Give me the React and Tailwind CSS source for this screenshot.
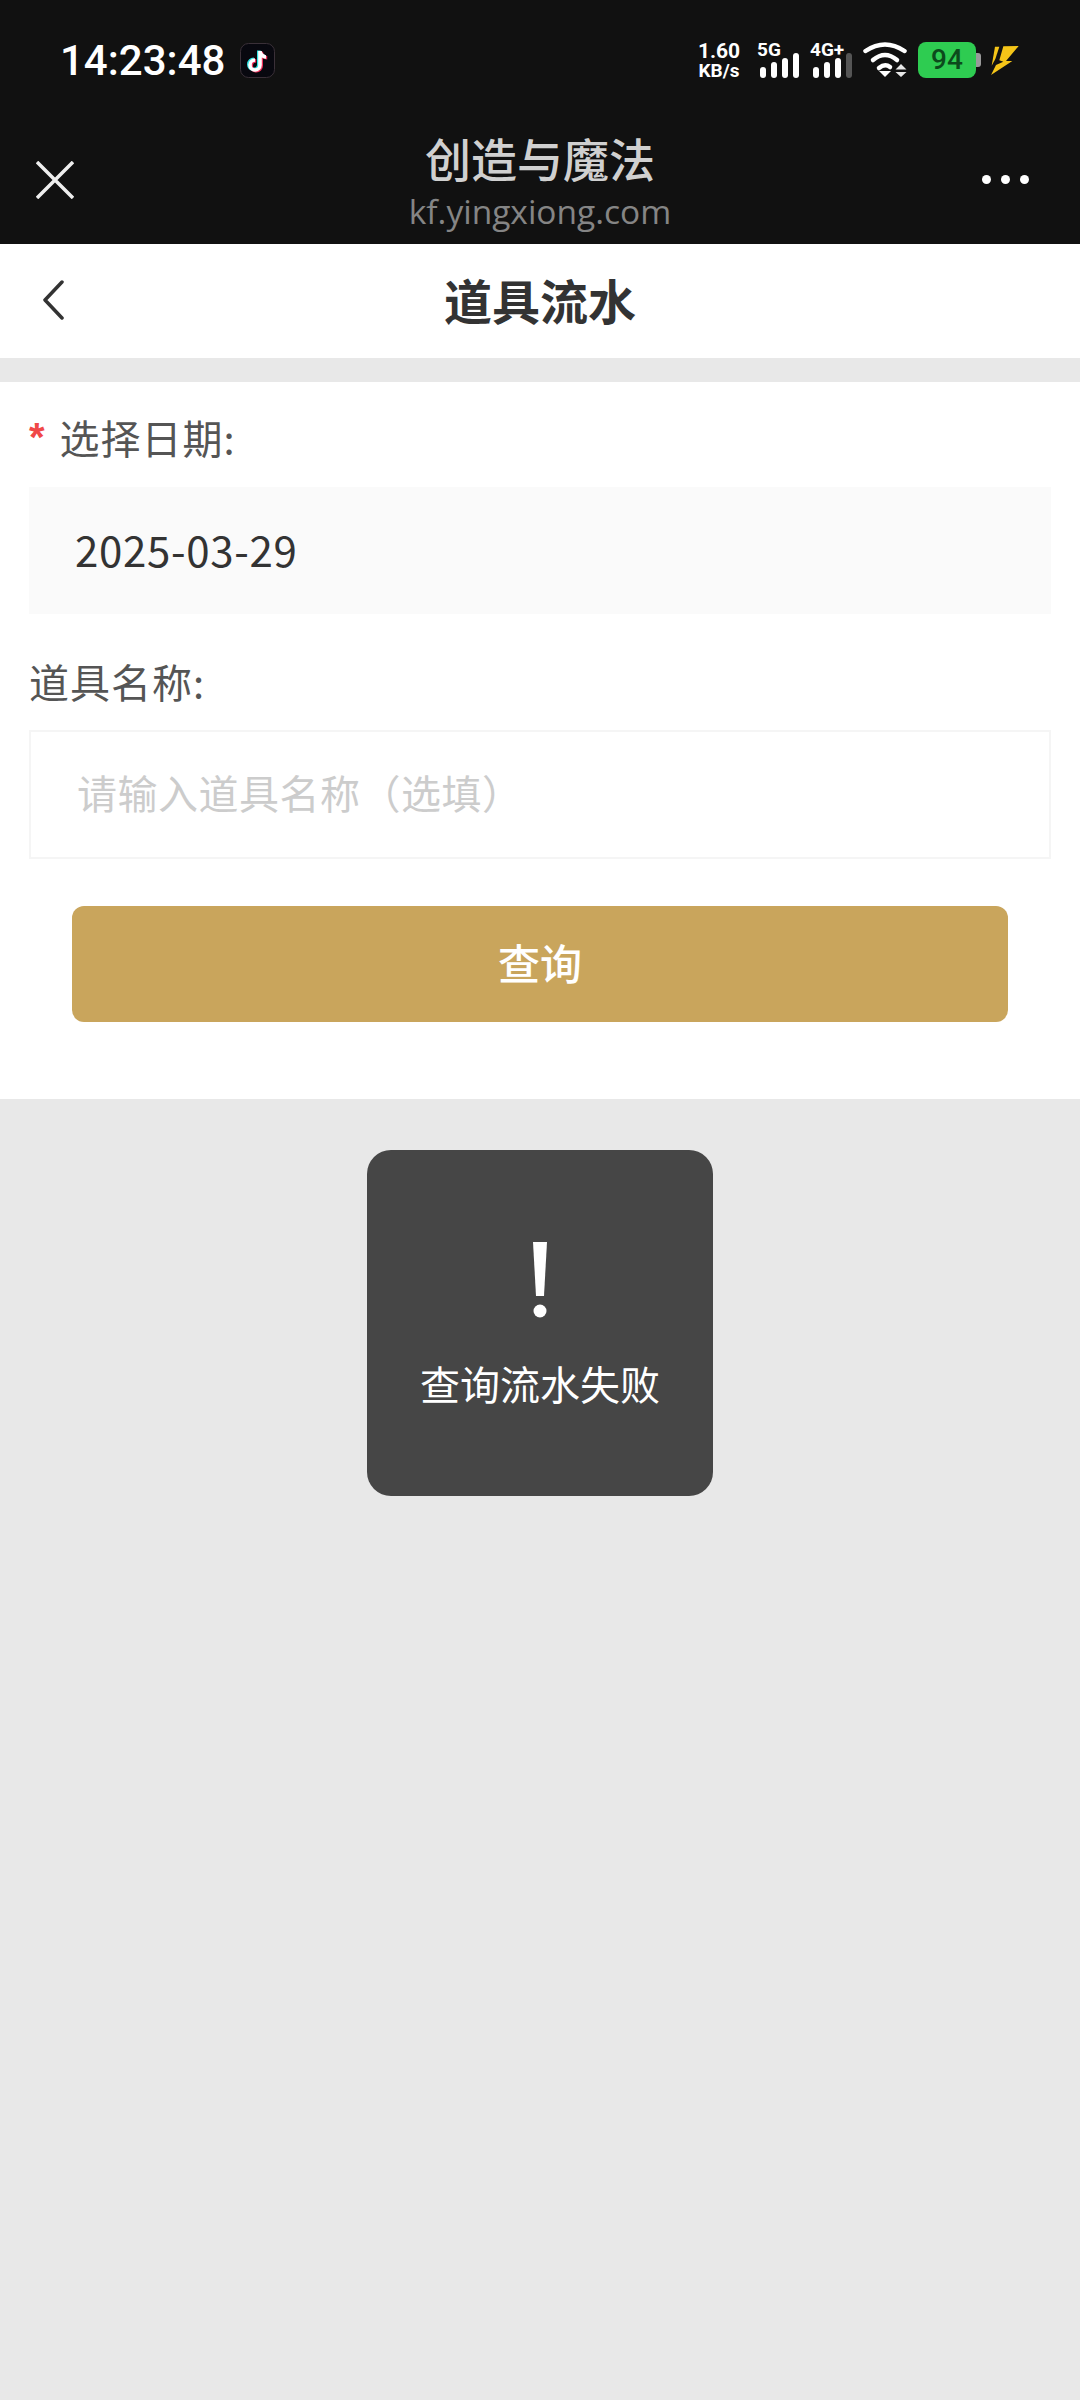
const cjk = "font-['Noto_Sans_CJK_SC',sans-serif]";

function SignalBars({ lastDim }) {
  const heights = [11, 16, 20, 25];
  return (
    <div className="flex items-end gap-[5px]">
      {heights.map((h, i) => (
        <div
          key={h}
          className={`w-[6px] rounded-[3px] ${lastDim && i === 3 ? 'bg-[#555555]' : 'bg-white'}`}
          style={{ height: h }}
        />
      ))}
    </div>
  );
}

function Network({ label, lastDim }) {
  return (
    <div className="flex w-[42px] flex-col">
      <span className="h-[15px] font-['Roboto',sans-serif] text-[19px] leading-[15px] font-bold text-white">{label}</span>
      <div className="mt-[-4px] ml-[3px] flex h-[25px] items-end">
        <SignalBars lastDim={lastDim} />
      </div>
    </div>
  );
}

function TikTokIcon() {
  const note = 'M20 8v14a5 5 0 1 1-5-5M20 8c0 3 3 6 6 6';
  return (
    <svg width="35" height="35" viewBox="0 0 35 35" className="ml-[15px] shrink-0">
      <rect x="0.5" y="0.5" width="34" height="34" rx="8" fill="#08080f" stroke="#3a3038" />
      <g fill="none" strokeWidth="3.6">
        <path d={note} stroke="#2fe3e3" transform="translate(-1.2 -0.6)" />
        <path d={note} stroke="#f0305a" transform="translate(1.2 0.8)" />
        <path d={note} stroke="#ffffff" />
      </g>
    </svg>
  );
}

function WifiIcon() {
  return (
    <svg width="44" height="35" viewBox="0 0 44 35" className="shrink-0">
      <g fill="none" stroke="#ffffff" strokeWidth="4.500" strokeLinecap="round">
        <path d="M2.500 9Q22 -4 41.500 9" />
        <path d="M10 18Q22 8 34 18" />
        <path d="M16 26Q22 21 27 25" />
      </g>
      <path d="M16 29h12l-6 6z" fill="#ffffff" />
      <path d="M38 22l5.500 5.500h-11zM32.500 30h11l-5.500 5z" fill="#e8e8e8" />
    </svg>
  );
}

function BoltIcon() {
  return (
    <svg width="30" height="30" viewBox="33 42 88 90" className="shrink-0">
      <polygon points="47,47 60,47 48,84 37,104" fill="#f5c518" />
      <polygon points="72,46 118,45 80,90 99,90 35,132 50,102 72,92 60,88" fill="#f5c518" />
    </svg>
  );
}

function StatusBar() {
  return (
    <div className="flex h-[120px] items-start justify-between pr-[60px] pl-[60px] pt-[42px]">
      <div className="flex items-center">
        <span className="font-['Roboto',sans-serif] text-[42px] leading-[37px] font-medium text-white">14:23:48</span>
        <TikTokIcon />
      </div>
      <div className="flex items-start">
        <div className="mr-[16px] flex w-[44px] flex-col items-center font-['Roboto',sans-serif] font-bold text-white">
          <span className="text-[21px] leading-[18px]">1.60</span>
          <span className="mt-[3px] text-[19px] leading-[16px]">KB/s</span>
        </div>
        <div className="mr-[11px]"><Network label="5G" /></div>
        <div className="mr-[11px]"><Network label="4G+" lastDim /></div>
        <div className="mr-[11px]"><WifiIcon /></div>
        <div className="mr-[9px] flex items-center">
          <div className="flex h-[36px] w-[58px] items-center justify-center rounded-[8px] bg-[#2ecc51] font-['Roboto',sans-serif] text-[28px] font-medium text-[#0c4a1c]">94</div>
          <div className="h-[14px] w-[5px] rounded-r-[3px] bg-[#9a9a9a]" />
        </div>
        <div className="mt-[3px]"><BoltIcon /></div>
      </div>
    </div>
  );
}

function BrowserBar() {
  return (
    <div className="grid h-[124px] grid-cols-[1fr_auto_1fr] items-start px-[36px]">
      <svg width="38" height="38" viewBox="0 0 38 38" className="mt-[41px]">
        <path d="M1 1l36 36M37 1L1 37" fill="none" stroke="#eeeeee" strokeWidth="3.500" />
      </svg>
      <div className="flex flex-col items-center pt-[6px]">
        <span className={`${cjk} text-[46px] leading-[62px] font-medium text-[#d0d0d0]`}>创造与魔法</span>
        <span className="mt-[1px] font-['Open_Sans',sans-serif] text-[33.500px] leading-[44px] text-[#858585]">kf.yingxiong.com</span>
      </div>
      <div className="mt-[55px] flex justify-end gap-[10px] pr-[15px]">
        <span className="size-[9px] rounded-full bg-white" />
        <span className="size-[9px] rounded-full bg-white" />
        <span className="size-[9px] rounded-full bg-white" />
      </div>
    </div>
  );
}

function PageHeader() {
  return (
    <div className="grid h-[114px] grid-cols-[1fr_auto_1fr] items-center bg-white px-[43px]">
      <svg width="22" height="40" viewBox="0 0 22 40" className="mt-[-2px] ml-[-1px]">
        <path d="M20 2L3 20l17 18" fill="none" stroke="#333333" strokeWidth="3.500" strokeLinecap="round" strokeLinejoin="round" />
      </svg>
      <h1 className={`${cjk} mt-[-5px] text-[48px] leading-[60px] font-bold text-[#333333]`}>道具流水</h1>
      <div />
    </div>
  );
}

function QueryForm() {
  return (
    <form className={`${cjk} mt-[24px] flex h-[717px] flex-col bg-white px-[29px]`}>
      <label className="mt-[25px] flex h-[60px] items-center text-[40px] leading-[60px] tracking-[1px] text-[#555555]">
        <span className="mr-[14px] font-['Liberation_Sans',sans-serif] font-bold text-[#f04848]">*</span>
        <span>选择日期:</span>
      </label>
      <input
        type="text"
        readOnly
        value="2025-03-29"
        className="mt-[20px] h-[127px] w-full bg-[#fafafa] px-[46px] pb-[5px] text-[42px] tracking-[0.7px] text-[#333333] outline-none"
      />
      <label className="mt-[37px] h-[60px] text-[40px] leading-[60px] tracking-[1px] text-[#555555]">道具名称:</label>
      <input
        type="text"
        placeholder="请输入道具名称（选填）"
        className="mt-[19px] h-[129px] w-full border-2 border-[#f5f5f5] bg-white px-[46px] pb-[5px] text-[40px] tracking-[0.5px] text-[#333333] outline-none placeholder:text-[#cccccc]"
      />
      <button
        type="button"
        className="mx-[43px] mt-[47px] h-[116px] rounded-[12px] bg-[#c9a55c] pb-[5px] text-[42px] font-medium text-white"
      >
        查询
      </button>
    </form>
  );
}

function Toast() {
  return (
    <div className={`${cjk} absolute top-[1150px] left-[367px] flex size-[346px] flex-col items-center rounded-[24px] bg-[#464646] text-white`}>
      <svg width="14" height="76" viewBox="0 0 14 76" className="mt-[92px]">
        <path d="M0 0h14l-3 54H3z" fill="#ffffff" />
        <circle cx="7" cy="69" r="6.500" fill="#ffffff" />
      </svg>
      <span className="mt-[35px] text-[40px] leading-[60px]">查询流水失败</span>
    </div>
  );
}

export default function App() {
  return (
    <div className="relative min-h-[2400px] bg-[#e8e8e8]">
      <header className="h-[244px] bg-[#111111]">
        <StatusBar />
        <BrowserBar />
      </header>
      <PageHeader />
      <QueryForm />
      <Toast />
    </div>
  );
}
